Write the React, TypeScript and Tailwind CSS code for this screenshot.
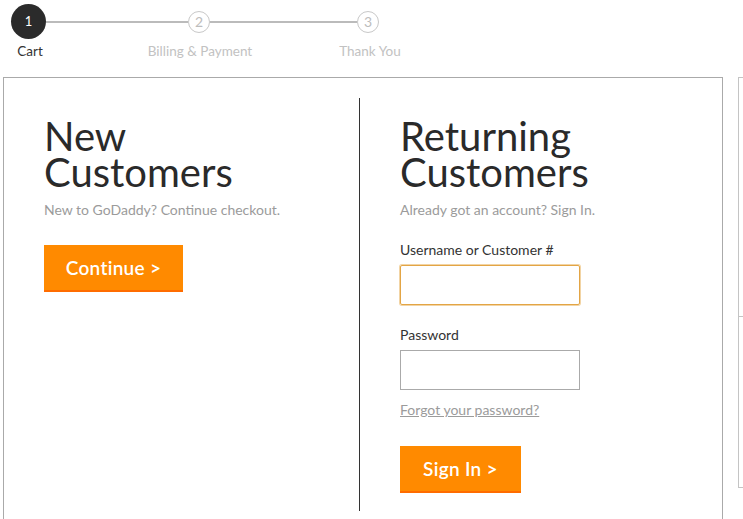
const steps = [
  { n: 1, label: 'Cart' },
  { n: 2, label: 'Billing & Payment' },
  { n: 3, label: 'Thank You' },
];

function Stepper() {
  return (
    <div className="select-none">
      {/* circles + connectors */}
      <div className="flex items-center pt-[4px] pl-[11px]">
        <div className="w-[35px] h-[35px] rounded-full bg-[#2b2b2b] flex items-center justify-center text-white text-[13px]">
          1
        </div>
        <div className="w-[142px] h-[2px] bg-[#bbbbbb]" />
        <div className="w-[22px] h-[22px] rounded-full border border-[#c8c8c8] flex items-center justify-center text-[14px] text-[#bdbdbd]">
          2
        </div>
        <div className="w-[147px] h-[2px] bg-[#bbbbbb]" />
        <div className="w-[22px] h-[22px] rounded-full border border-[#c8c8c8] flex items-center justify-center text-[14px] text-[#bdbdbd]">
          3
        </div>
      </div>
      {/* labels */}
      <div className="grid grid-cols-[170px_170px_170px] ml-[-55px] mt-[2px]">
        {steps.map((s) => (
          <span
            key={s.n}
            className={`text-center text-[13.5px] leading-[20px] ${s.n === 1 ? 'text-[#333333]' : 'text-[#c2c2c2]'}`}
          >
            {s.label}
          </span>
        ))}
      </div>
    </div>
  );
}

function OrangeButton({ label, width }: { label: string; width: string }) {
  return (
    <button
      className={`${width} h-[47px] pt-[2px] bg-[#ff8a00] border-b-[2px] border-[#ff6c00] text-white text-[19px] font-semibold tracking-[0.3px] flex items-center justify-center`}
    >
      {label}
    </button>
  );
}

export default function App() {
  return (
    <div
      className="w-screen h-screen overflow-hidden bg-white text-[#333333]"
      style={{ fontFamily: 'Lato, "Open Sans", Arial, sans-serif' }}
    >
      <Stepper />

      <div className="flex items-start gap-[15px] mt-[16px] ml-[3px]">
        {/* main panel */}
        <div className="w-[720px] shrink-0 border border-[#aaaaaa] pt-[20px] pb-[20px] flex">
          {/* New customers */}
          <div className="w-[355px] h-[413px] pl-[40px] pt-[20px]">
            <h1 className="text-[40px] leading-[36px] font-normal text-[#2a2a2a]">
              New
              <br />
              Customers
            </h1>
            <p className="mt-[10px] text-[14px] leading-[20px] text-[#9b9b9b]">
              New to GoDaddy? Continue checkout.
            </p>
            <div className="mt-[25px]">
              <OrangeButton label="Continue >" width="w-[139px]" />
            </div>
          </div>

          {/* Returning customers */}
          <div className="flex-1 h-[413px] border-l border-[#333333] pl-[40px] pt-[20px]">
            <h1 className="text-[40px] leading-[36px] font-normal text-[#2a2a2a]">
              Returning
              <br />
              Customers
            </h1>
            <p className="mt-[10px] text-[14px] leading-[20px] text-[#9b9b9b]">
              Already got an account? Sign In.
            </p>

            <label className="block mt-[20px] text-[14px] leading-[20px] text-[#333333]">
              Username or Customer #
            </label>
            <input
              type="text"
              className="block mt-[5px] w-[180px] h-[40px] rounded-[2px] border border-[#e3a545] shadow-[0_0_0_1px_rgba(232,176,90,0.55)] outline-none"
            />

            <label className="block mt-[20px] text-[14px] leading-[20px] text-[#333333]">
              Password
            </label>
            <input
              type="password"
              className="block mt-[5px] w-[180px] h-[40px] border border-[#aaaaaa] outline-none"
            />

            <a
              href="#"
              className="inline-block mt-[10px] text-[14px] leading-[20px] text-[#9b9b9b] underline"
            >
              Forgot your password?
            </a>

            <div className="mt-[25px]">
              <OrangeButton label="Sign In >" width="w-[121px]" />
            </div>
          </div>
        </div>

        {/* side summary box (cut off by viewport) */}
        <div className="w-[200px] h-[411px] shrink-0 border border-[#c4c4c4]">
          <div className="h-[239px] border-b border-[#c4c4c4]" />
        </div>
      </div>
    </div>
  );
}
